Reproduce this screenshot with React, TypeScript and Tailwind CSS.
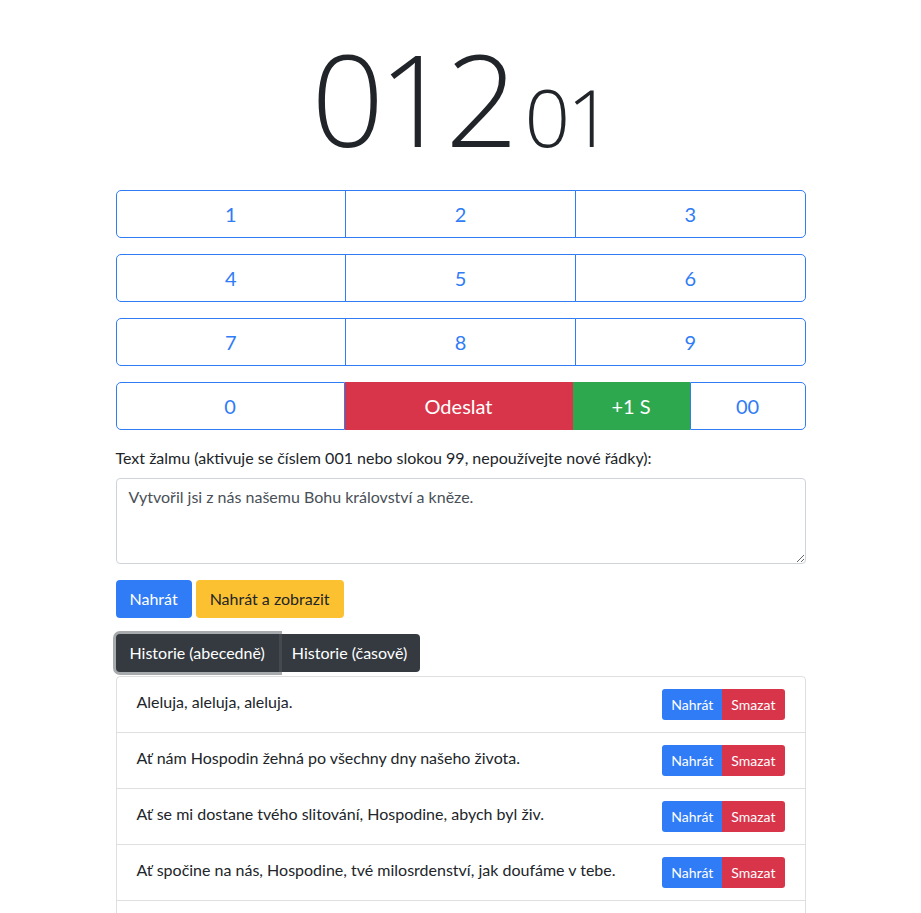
const history = [
  'Aleluja, aleluja, aleluja.',
  'Ať nám Hospodin žehná po všechny dny našeho života.',
  'Ať se mi dostane tvého slitování, Hospodine, abych byl živ.',
  'Ať spočine na nás, Hospodine, tvé milosrdenství, jak doufáme v tebe.',
  'Blaze těm, kdo zachovávají právo a jednají spravedlivě v každé době.',
];

const numBtn =
  'flex-1 h-12 flex items-center justify-center text-[20px] text-[#2f7cf6] bg-white border border-[#2f7cf6] -ml-px first:ml-0';

export default function App() {
  const rows = [
    ['1', '2', '3'],
    ['4', '5', '6'],
    ['7', '8', '9'],
  ];

  return (
    <div className="min-h-screen bg-white font-['Lato',sans-serif] text-[#212529]">
      <div className="w-[690px] mx-auto">
        {/* Display */}
        <div className="h-[190px] flex items-end justify-center pb-[28px]">
          <div className="flex items-baseline font-['Open_Sans',sans-serif] font-light leading-none text-[#212529]">
            <span className="text-[128px] tracking-[-6px]">012</span>
            <span className="text-[80px] tracking-[-3px] ml-[12px]">01</span>
          </div>
        </div>

        {/* Keypad */}
        <div className="flex flex-col gap-4">
          {rows.map((row, i) => (
            <div key={i} className="flex">
              {row.map((n, j) => (
                <button
                  key={n}
                  className={`${numBtn} ${j === 0 ? 'rounded-l-[5px]' : ''} ${j === 2 ? 'rounded-r-[5px]' : ''}`}
                >
                  {n}
                </button>
              ))}
            </div>
          ))}
          <div className="flex">
            <button className="w-[229px] h-12 flex items-center justify-center text-[20px] text-[#2f7cf6] bg-white border border-[#2f7cf6] rounded-l-[5px]">
              0
            </button>
            <button className="w-[228px] h-12 flex items-center justify-center text-[20px] text-white bg-[#d9354a] border border-[#d9354a]">
              Odeslat
            </button>
            <button className="w-[117px] h-12 flex items-center justify-center text-[20px] text-white bg-[#2ea84f] border border-[#2ea84f]">
              +1 S
            </button>
            <button className="flex-1 h-12 flex items-center justify-center text-[20px] text-[#2f7cf6] bg-white border border-[#2f7cf6] rounded-r-[5px]">
              00
            </button>
          </div>
        </div>

        {/* Psalm text */}
        <div className="mt-4">
          <label className="block text-[16px] leading-6 mb-2">
            Text žalmu (aktivuje se číslem 001 nebo slokou 99, nepoužívejte nové řádky):
          </label>
          <textarea
            rows={3}
            defaultValue="Vytvořil jsi z nás našemu Bohu království a kněze."
            className="block w-full h-[86px] px-3 py-[6px] text-[16px] leading-6 text-[#495057] border border-[#ced4da] rounded-[4px] resize-y outline-none"
          />
        </div>

        <div className="mt-4 flex gap-1">
          <button className="h-[38px] px-[14px] rounded-[4px] bg-[#2f7cf6] text-white text-[16px]">Nahrát</button>
          <button className="h-[38px] px-[14px] rounded-[4px] bg-[#fcc130] text-[#212529] text-[16px]">
            Nahrát a zobrazit
          </button>
        </div>

        <div className="mt-4 flex">
          <button className="relative z-10 h-[38px] px-[14px] rounded-l-[4px] bg-[#343a40] text-white text-[16px] shadow-[0_0_0_3px_rgba(82,88,93,0.5)]">
            Historie (abecedně)
          </button>
          <button className="h-[38px] px-[13px] rounded-r-[4px] bg-[#343a40] text-white text-[16px]">
            Historie (časově)
          </button>
        </div>

        {/* History list */}
        <div className="mt-1 border border-black/[0.125] rounded-t-[4px]">
          {history.map((t, i) => (
            <div
              key={i}
              className="flex items-center justify-between px-5 h-[56px] border-b border-black/[0.125] last:border-b-0"
            >
              <span className="text-[16px] leading-6 -mt-[6px]">{t}</span>
              <div className="flex">
                <button className="h-[31px] px-[9px] rounded-l-[3px] bg-[#2f7cf6] text-white text-[14px]">Nahrát</button>
                <button className="h-[31px] px-[9px] rounded-r-[3px] bg-[#d9354a] text-white text-[14px]">Smazat</button>
              </div>
            </div>
          ))}
        </div>
      </div>
    </div>
  );
}
